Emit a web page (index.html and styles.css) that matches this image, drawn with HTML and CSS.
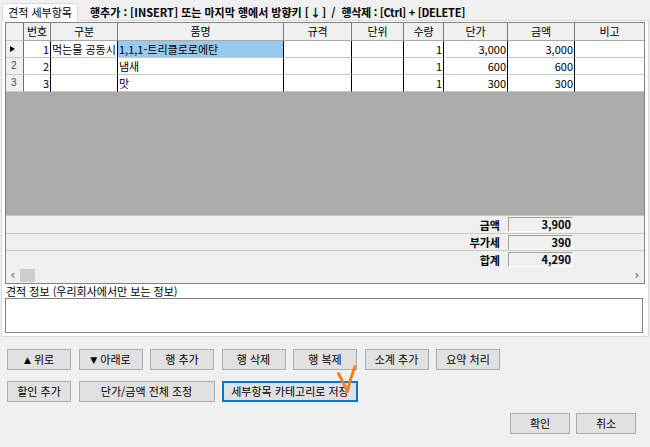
FILE: index.html
```html
<!DOCTYPE html>
<html lang="ko">
<head>
<meta charset="utf-8">
<link rel="stylesheet" href="styles.css">
</head>
<body>
<div class="topbar">
  <div class="tab">견적 세부항목</div>
  <div class="hint">행추가 : [INSERT] 또는 마지막 행에서 방향키 [<span class="down">↓</span>]<span class="slash">/</span><span class="second">행삭제 : [Ctrl] + [DELETE]</span></div>
</div>
<div class="panel">
  <div class="grid">
    <div class="row head">
      <div class="c rh"></div>
      <div class="c">번호</div>
      <div class="c">구분</div>
      <div class="c">품명</div>
      <div class="c">규격</div>
      <div class="c">단위</div>
      <div class="c">수량</div>
      <div class="c">단가</div>
      <div class="c">금액</div>
      <div class="c last">비고</div>
    </div>
    <div class="row data">
      <div class="c rh"><span class="tri"></span></div>
      <div class="c r">1</div>
      <div class="c l">먹는물 공동시</div>
      <div class="c l sel">1,1,1-트리클로로에탄</div>
      <div class="c"></div>
      <div class="c"></div>
      <div class="c r">1</div>
      <div class="c r">3,000</div>
      <div class="c r">3,000</div>
      <div class="c last"></div>
    </div>
    <div class="row data">
      <div class="c rh num">2</div>
      <div class="c r">2</div>
      <div class="c l"></div>
      <div class="c l">냄새</div>
      <div class="c"></div>
      <div class="c"></div>
      <div class="c r">1</div>
      <div class="c r">600</div>
      <div class="c r">600</div>
      <div class="c last"></div>
    </div>
    <div class="row data">
      <div class="c rh num">3</div>
      <div class="c r">3</div>
      <div class="c l"></div>
      <div class="c l">맛</div>
      <div class="c"></div>
      <div class="c"></div>
      <div class="c r">1</div>
      <div class="c r">300</div>
      <div class="c r">300</div>
      <div class="c last"></div>
    </div>
    <div class="empty"></div>
    <div class="sum s1">
      <div class="slabel">금액</div>
      <div class="sbox">3,900</div>
    </div>
    <div class="sum s2">
      <div class="slabel">부가세</div>
      <div class="sbox">390</div>
    </div>
    <div class="sum s3">
      <div class="slabel">합계</div>
      <div class="sbox">4,290</div>
    </div>
    <div class="hscroll">
      <span class="arrow">&lsaquo;</span>
      <span class="thumb"></span>
      <span class="spacer"></span>
      <span class="arrow">&rsaquo;</span>
    </div>
  </div>
  <div class="infolabel">견적 정보 (우리회사에서만 보는 정보)</div>
  <div class="memo"></div>
</div>
<div class="buttons">
  <div class="brow">
    <div class="btn"><span class="glyph">▲</span> 위로</div>
    <div class="btn"><span class="glyph">▼</span> 아래로</div>
    <div class="btn">행 추가</div>
    <div class="btn">행 삭제</div>
    <div class="btn">행 복제</div>
    <div class="btn">소계 추가</div>
    <div class="btn">요약 처리</div>
  </div>
  <div class="brow">
    <div class="btn">할인 추가</div>
    <div class="btn wide">단가/금액 전체 조정</div>
    <div class="btn wide focus">세부항목 카테고리로 저장</div>
  </div>
  <div class="brow end">
    <div class="btn ok">확인</div>
    <div class="btn ok">취소</div>
  </div>
</div>
<svg class="check" width="26" height="34" viewBox="0 0 26 34">
  <path d="M4.5 11.5 Q9 20 13.5 29.5 Q16 17 21 4.5" fill="none" stroke="#f5821f" stroke-width="3" stroke-linecap="round" stroke-linejoin="round"/>
</svg>
</body>
</html>
```
FILE: styles.css
```css
* { box-sizing: border-box; }
html, body {
  margin: 0;
  padding: 0;
}
body {
  width: 650px;
  height: 447px;
  overflow: hidden;
  background: #f0f0f0;
  font-family: "Noto Sans CJK KR", "Liberation Sans", sans-serif;
  font-size: 11px;
  color: #000;
  position: relative;
}
.topbar {
  height: 20px;
  display: flex;
  align-items: flex-end;
}
.tab {
  margin-left: 2px;
  width: 76px;
  height: 18px;
  background: #fff;
  border: 1px solid #d9d9d9;
  border-bottom: none;
  text-align: center;
  line-height: 17px;
  position: relative;
  top: 1px;
}
.hint {
  margin-left: 12px;
  align-self: center;
  font-weight: bold;
  line-height: 14px;
  padding-top: 3px;
  white-space: nowrap;
}
.down { padding: 0 1px; }
.slash { padding: 0 6px 0 5px; }
.second { letter-spacing: -0.3px; }
.panel {
  margin: 0 1px;
  height: 317px;
  background: #fff;
  border: 1px solid #d9d9d9;
  padding: 1px 3px 0 3px;
}
.grid {
  width: 640px;
  border: 1px solid #828282;
  background: #ababab;
}
.row {
  display: grid;
  grid-template-columns: 18px 27px 67px 166px 68px 52px 40px 64px 67px 69px;
}
.row.head { height: 18px; background: #f0f0f0; }
.row.data { height: 17px; background: #fff; }
.c {
  border-right: 1px solid #000;
  border-bottom: 1px solid #c8c8c8;
  line-height: 16px;
  white-space: nowrap;
  overflow: hidden;
  padding: 0 1px;
}
.head .c {
  text-align: center;
  border-right: 1px solid #7a7a7a;
  border-bottom: 1px solid #a8a8a8;
  line-height: 17px;
}
.c.last { border-right: none; }
.c.r { text-align: right; }
.c.l { text-align: left; }
.c.sel { background: #99c9ef; }
.c.rh {
  background: #f0f0f0;
  border-right: 1px solid #6e6e6e;
  border-bottom: 1px solid #c8c8c8;
  position: relative;
}
.tri {
  position: absolute;
  left: 4px;
  top: 5px;
  width: 0;
  height: 0;
  border-left: 5px solid #000;
  border-top: 3.5px solid transparent;
  border-bottom: 3.5px solid transparent;
}
.c.num {
  font-size: 10px;
  color: #24507e;
  padding-left: 5px;
  font-family: "Liberation Sans", sans-serif;
}
.empty { height: 123px; background: #ababab; }
.sum {
  display: flex;
  align-items: center;
  background: #f0f0f0;
  border-top: 1px solid #c2cfb8;
}
.s1 { height: 18px; }
.s2 { height: 17px; }
.s3 { height: 18px; }
.slabel {
  width: 494px;
  text-align: right;
  font-weight: bold;
  line-height: 14px;
}
.sbox {
  margin-left: 8px;
  width: 65px;
  height: 15px;
  background: #f0f0f0;
  border-top: 1px solid #a0a0a0;
  border-left: 1px solid #a0a0a0;
  border-right: 1px solid #fff;
  border-bottom: 1px solid #fff;
  text-align: right;
  font-weight: bold;
  line-height: 13px;
  padding-right: 1px;
}
.hscroll {
  height: 15px;
  background: #f0f0f0;
  display: flex;
  align-items: stretch;
}
.arrow {
  width: 14px;
  text-align: center;
  line-height: 14px;
  font-size: 12px;
  color: #606060;
  font-family: "DejaVu Sans", sans-serif;
}
.thumb {
  width: 15px;
  margin: 1px 0;
  background: #cdcdcd;
}
.spacer { flex: 1; }
.infolabel {
  height: 14px;
  line-height: 14px;
  padding-left: 1px;
}
.memo {
  width: 638px;
  height: 35px;
  border: 1px solid #828282;
  background: #fff;
}
.buttons {
  padding: 12px 0 0 7px;
}
.brow {
  display: flex;
  gap: 7.5px;
  margin-bottom: 11px;
}
.brow.end {
  justify-content: flex-end;
  gap: 6px;
  padding-right: 14px;
  margin-top: 1px;
}
.btn {
  width: 64px;
  height: 21px;
  background: #e1e1e1;
  border: 1px solid #adadad;
  text-align: center;
  line-height: 19px;
  white-space: nowrap;
}
.glyph {
  font-size: 9px;
  font-family: "DejaVu Sans", sans-serif;
  vertical-align: 1px;
}
.btn.wide { width: 136px; }
.btn.focus { border: 1px solid #0078d7; box-shadow: inset 0 0 0 1px #0078d7; }
.btn.ok { width: 60px; }
.check {
  position: absolute;
  left: 334px;
  top: 362px;
}
```
